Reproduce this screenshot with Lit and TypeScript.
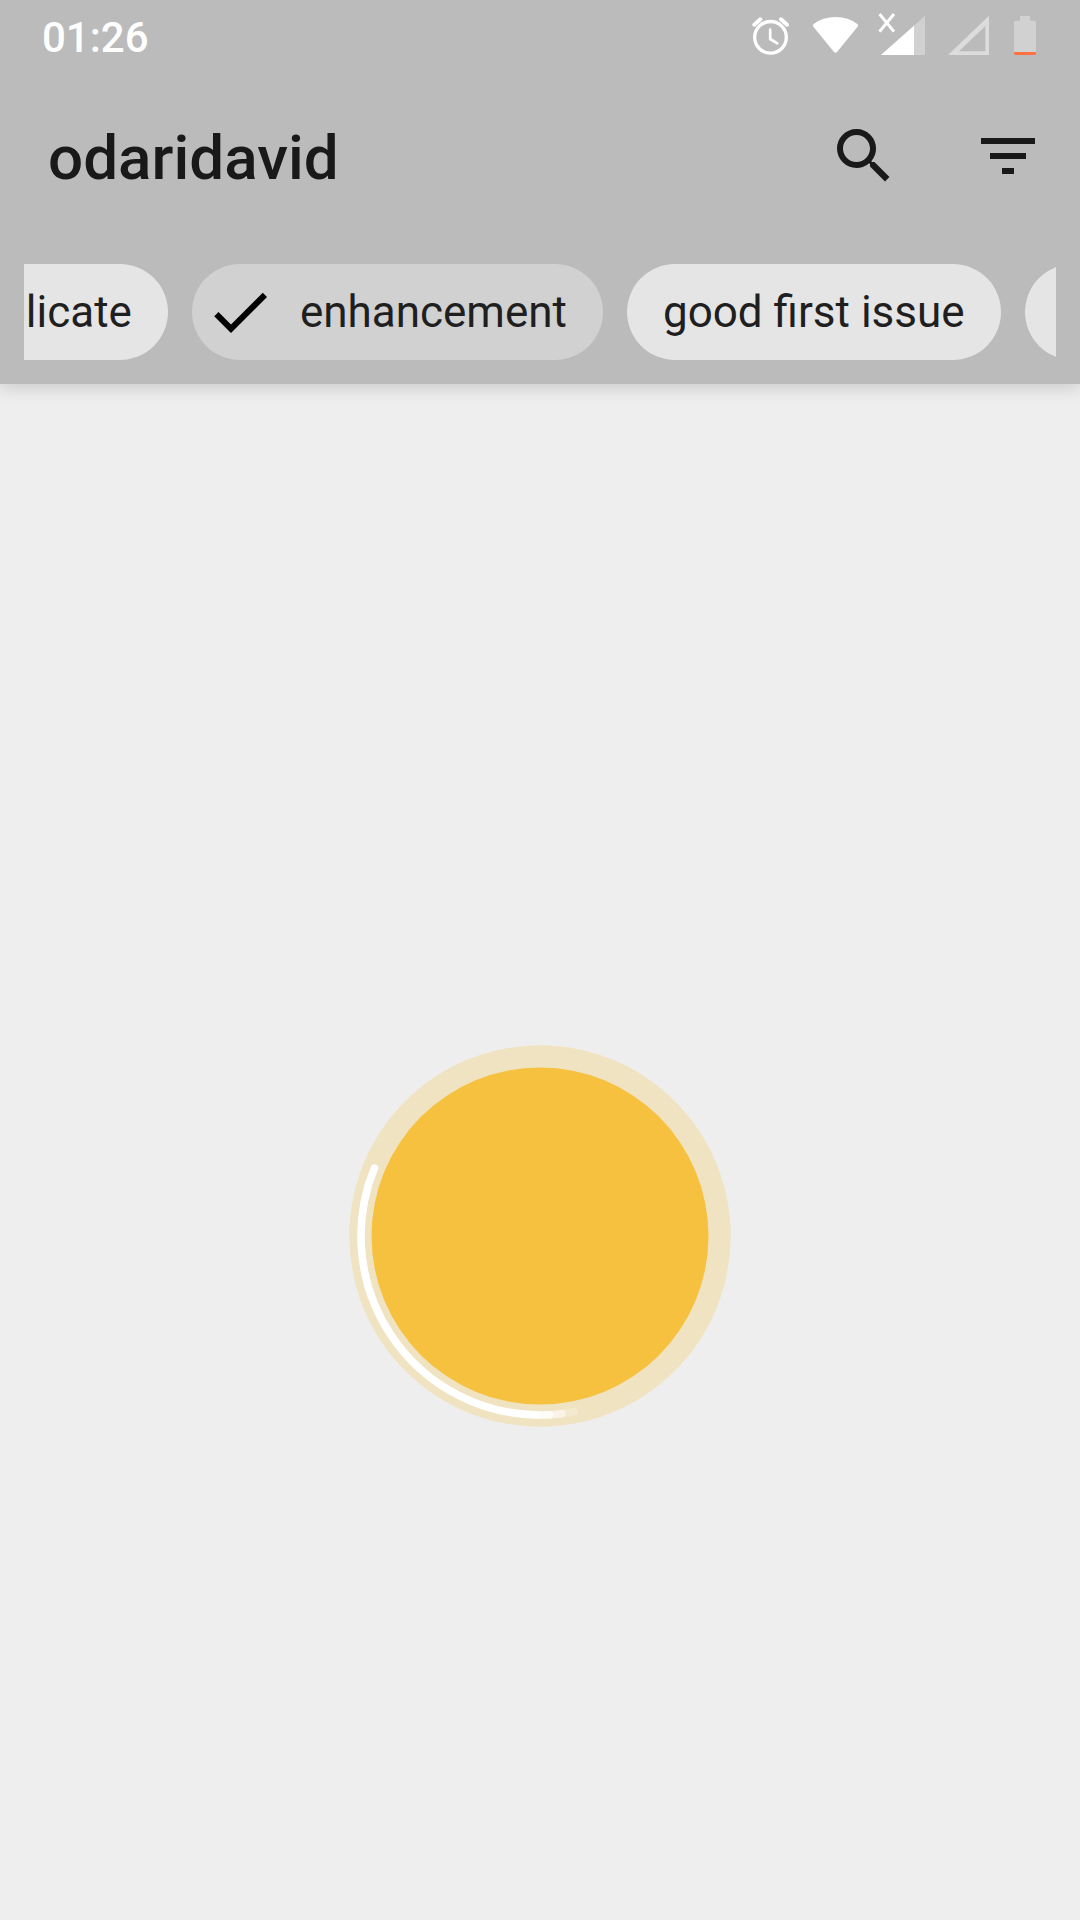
import { LitElement, html, css, svg, nothing } from "lit";
import { customElement, state, query } from "lit/decorators.js";

interface Label {
  name: string;
  selected: boolean;
}

@customElement("status-bar")
export class StatusBar extends LitElement {
  static styles = css`
    :host {
      display: flex;
      align-items: center;
      justify-content: space-between;
      height: 72px;
      padding: 0 44px 0 42px;
      color: #fff;
    }
    .clock {
      padding-top: 4px;
      font-size: 42px;
      font-weight: 500;
      line-height: 72px;
    }
    .icons {
      display: flex;
      gap: 16px;
      height: 48px;
      margin-bottom: 8px;
    }
    svg {
      display: block;
      height: 48px;
    }
  `;

  render() {
    return html`
      <time class="clock">01:26</time>
      <div class="icons">
        <svg width="41" viewBox="66 24 123 144" role="img" aria-label="Alarm set">
          <g fill="none" stroke="#fff" stroke-linecap="round" stroke-linejoin="round">
            <circle cx="121.500" cy="112" r="47.500" stroke-width="10" />
            <path d="M120.500 89V117L142 130" stroke-width="8" />
            <path d="M73 74L91 58M153 58L171 74" stroke-width="12" />
          </g>
        </svg>
        <svg width="53" viewBox="237 24 159 144" role="img" aria-label="Wi-Fi">
          <path
            fill="#fff"
            d="M249 79Q247 75 251 72Q278 51 316.500 51Q355 51 382 72Q386 75 384 79L321 156Q316.500 161 312 156Z"
          />
        </svg>
        <svg width="54" viewBox="444 24 162 144" role="img" aria-label="Mobile signal, no data">
          <path fill="#d1d1d1" d="M585 47V165H453Z" />
          <path fill="#fff" d="M552 77V165H453Z" />
          <path d="M448.500 42L492 95M492 42L448.500 95" fill="none" stroke="#fff" stroke-width="9" />
        </svg>
        <svg width="50" viewBox="654 24 150 144" role="img" aria-label="No second signal">
          <path fill="#dcdcdc" fill-rule="evenodd" d="M777 47V165H654ZM766 78L687 154H766Z" />
        </svg>
        <svg width="22" viewBox="852 24 66 144" role="img" aria-label="Battery low">
          <path
            fill="#d1d1d1"
            d="M870 48H900V62H913Q918 62 918 67V156H852V67Q852 62 857 62H870Z"
          />
          <path fill="#ff7043" d="M852 156H918V160Q918 165 913 165H857Q852 165 852 160Z" />
        </svg>
      </div>
    `;
  }
}

@customElement("loading-disc")
export class LoadingDisc extends LitElement {
  static styles = css`
    :host {
      display: block;
    }
    svg {
      display: block;
      width: 382px;
      height: 382px;
    }
  `;

  private point(deg: number) {
    const a = (deg * Math.PI) / 180;
    return `${(179 * Math.sin(a)).toFixed(2)} ${(179 * Math.cos(a)).toFixed(2)}`;
  }

  /* Angles run from straight down, positive towards the right. */
  private arc(from: number, to: number, color: string) {
    return svg`<path d="M${this.point(from)}A179 179 0 0 1 ${this.point(to)}"
      fill="none" stroke=${color} stroke-width="7.6" stroke-linecap="round" />`;
  }

  render() {
    return html`
      <svg viewBox="-191 -191 382 382" role="progressbar" aria-label="Loading">
        <circle r="190.700" fill="#f0e3c1" />
        <circle r="168.500" fill="#f7c140" />
        ${this.arc(11, 7, "#f3e9cf")}
        ${this.arc(7, 3, "#faf3e6")}
        ${this.arc(3, -1, "#fefcf8")}
        ${this.arc(-1, -112.3, "#ffffff")}
      </svg>
    `;
  }
}

@customElement("app-root")
export class AppRoot extends LitElement {
  static styles = css`
    :host {
      display: flex;
      flex-direction: column;
      min-height: 100vh;
      background: #eee;
      font-family: Roboto, "Liberation Sans", sans-serif;
    }
    .header {
      background: #bbb;
      box-shadow: 0 4px 16px rgba(0, 0, 0, 0.15);
    }
    .toolbar {
      display: flex;
      align-items: center;
      height: 168px;
      padding-left: 48px;
      color: #191919;
    }
    .title {
      flex: 1;
      margin: 0;
      padding-top: 4px;
      font-size: 62px;
      font-weight: 500;
      line-height: 72px;
    }
    .action {
      display: flex;
      justify-content: center;
      width: 144px;
      padding: 36px 0;
      border: 0;
      background: none;
      color: inherit;
    }
    .icon {
      display: block;
      flex: none;
      width: 72px;
      height: 72px;
      fill: currentColor;
    }
    .labels {
      position: relative;
      display: flex;
      gap: 24px;
      margin: 0 24px;
      padding: 24px 0;
      overflow-x: auto;
      scrollbar-width: none;
    }
    .chip {
      display: flex;
      flex: none;
      align-items: center;
      gap: 24px;
      height: 96px;
      padding: 0 36px;
      border: 0;
      border-radius: 48px;
      background: #e5e5e5;
      color: #1f1f1f;
      font: 400 44px/48px Roboto, "Liberation Sans", sans-serif;
    }
    .chip.selected {
      padding-left: 12px;
      background: #d1d1d1;
    }
    .check {
      color: #000;
    }
    .content {
      display: flex;
      flex: 1;
      align-items: center;
      justify-content: center;
      padding-top: 168px;
    }
  `;

  @state() private labels: Label[] = [
    { name: "duplicate", selected: false },
    { name: "enhancement", selected: true },
    { name: "good first issue", selected: false },
    { name: "help wanted", selected: false },
  ];

  @query(".labels") private strip!: HTMLElement;
  @query(".chip.selected") private selectedChip!: HTMLElement;

  /* Bring the selected chip into view, leaving part of the previous one showing. */
  firstUpdated() {
    this.strip.scrollLeft = this.selectedChip.offsetLeft - 168;
  }

  private toggle(name: string) {
    this.labels = this.labels.map((l) =>
      l.name === name ? { ...l, selected: !l.selected } : l
    );
  }

  private chip(label: Label) {
    return html`
      <button
        type="button"
        class="chip ${label.selected ? "selected" : ""}"
        aria-pressed=${label.selected ? "true" : "false"}
        @click=${() => this.toggle(label.name)}
      >
        ${label.selected
          ? html`<svg class="icon check" viewBox="0 0 24 24" aria-hidden="true">
              <path d="M9 16.170L4.830 12l-1.420 1.410L9 19 21 7l-1.410-1.410z" />
            </svg>`
          : nothing}
        <span>${label.name}</span>
      </button>
    `;
  }

  render() {
    return html`
      <header class="header">
        <status-bar></status-bar>
        <div class="toolbar">
          <h1 class="title">odaridavid</h1>
          <button type="button" class="action" aria-label="Search">
            <svg class="icon" viewBox="0 0 24 24" aria-hidden="true">
              <path
                d="M15.500 14h-.790l-.280-.270A6.471 6.471 0 0 0 16 9.500 6.500 6.500 0 1 0 9.500 16c1.610 0 3.090-.590 4.230-1.570l.270.280v.790l5 4.990L20.490 19l-4.990-5zm-6 0C7.010 14 5 11.990 5 9.500S7.010 5 9.500 5 14 7.010 14 9.500 11.990 14 9.500 14z"
              />
            </svg>
          </button>
          <button type="button" class="action" aria-label="Filter">
            <svg class="icon" viewBox="0 0 24 24" aria-hidden="true">
              <path d="M10 18h4v-2h-4v2zM3 6v2h18V6H3zm3 7h12v-2H6v2z" />
            </svg>
          </button>
        </div>
        <nav class="labels" aria-label="Labels">
          ${this.labels.map((l) => this.chip(l))}
        </nav>
      </header>
      <main class="content">
        <loading-disc></loading-disc>
      </main>
    `;
  }
}
